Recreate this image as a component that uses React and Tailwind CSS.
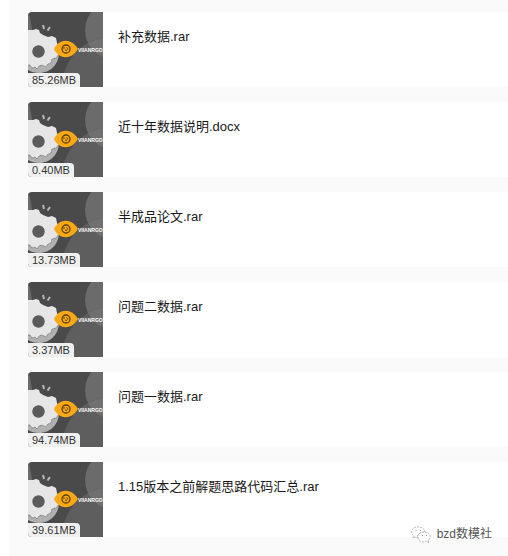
import React from "react";

const files = [
  { name: "补充数据.rar", size: "85.26MB" },
  { name: "近十年数据说明.docx", size: "0.40MB" },
  { name: "半成品论文.rar", size: "13.73MB" },
  { name: "问题二数据.rar", size: "3.37MB" },
  { name: "问题一数据.rar", size: "94.74MB" },
  { name: "1.15版本之前解题思路代码汇总.rar", size: "39.61MB" },
];

const Cover = () => {
  return (
    <svg viewBox="0 0 75 75" className="block size-full" aria-hidden="true">
      <rect width="75" height="75" fill="#4a4a4a" />
      <path d="M0 0C2 4 3 11 4 18L0 20Z" fill="#6b6b6b" />
      <circle cx="86" cy="18" r="29" fill="#6b6b6b" />
      <circle cx="84" cy="75" r="50" fill="#5e5e5e" />
      <path d="M60 31A50 50 0 0 1 75 26V45A29 29 0 0 1 60 31Z" fill="#707070" />
      <path d="M31 38C32 52 22 61 11 61C7 61 3 60 0 58V38Z" fill="#b0b0b0" />
      <path
        d="M0 18L5 18L8 17L11 18L12 21L15 23L20 25L24 24L28 26L29 31L31 35L30 39L31 42L28 46L24 47L23 51L20 52L18 55L14 53L11 54L9 57L7 55L4 56L2 53L0 53Z"
        fill="#e6e6e6"
      />
      <path
        d="M31 42L28 46L24 47L23 51L20 52L18 55L14 53L11 54L9 57L7 55L4 56L2 53L0 53"
        fill="none"
        stroke="#5b5b5b"
        strokeWidth="0.7"
        strokeDasharray="1 0.5"
      />
      <circle cx="10.5" cy="39.5" r="6.2" fill="#5b5b5b" />
      <path d="M15 13L16 17M22 15L19.5 18.5" stroke="#b8b8b8" strokeWidth="2" />
      <path d="M26 37C31 26 44 26 50 37C44 48 31 48 26 37Z" fill="#faa814" />
      <circle cx="38" cy="37" r="4" fill="none" stroke="#59420f" strokeWidth="1.3" />
      <path d="M35 36H37M38.5 35.5A1.5 1.5 0 1 1 37 38" fill="none" stroke="#59420f" />
      <text
        x="50"
        y="40"
        fill="#ffffff"
        className="font-['Liberation_Sans',sans-serif] text-[5px] font-bold"
      >
        VIIANRGO
      </text>
    </svg>
  );
};

const FileRow = ({ file }) => {
  return (
    <li className="flex bg-white rounded-l-sm">
      <div className="relative size-[75px] shrink-0 overflow-hidden rounded-l-sm">
        <Cover />
        <span className="absolute bottom-0 left-0 rounded-tr bg-[#f0f0f0] px-1 text-[11px] leading-[14px] text-[#333333]">
          {file.size}
        </span>
      </div>
      <p className="min-w-0 flex-1 px-[15px] pt-[15px] text-[13px] leading-5 text-[#191919]">
        {file.name}
      </p>
    </li>
  );
};

const Watermark = () => {
  return (
    <div className="absolute right-4 bottom-3 flex items-center gap-1.5">
      <svg
        viewBox="0 0 20 17"
        className="h-[17px] w-5"
        fill="#ffffff"
        stroke="#a5a5a5"
        strokeWidth="0.8"
        strokeDasharray="2 1"
        aria-hidden="true"
      >
        <path d="M2 12L3 10C-1 7 0 1 7 1C12 1 14 4 14 6C8 6 6 9 7 12C6 12 5 11 5 11Z" />
        <path d="M13 6C9 6 7 8 7 11C7 14 10 16 13 16L15 15L18 17L17 14C21 11 19 6 13 6Z" />
        <path d="M4.5 4.5h1M9 4.5h1M11 9.5h1M15 9.5h1" stroke="#777777" strokeDasharray="none" />
      </svg>
      <span className="text-[12px] leading-5 text-[#555555] [text-shadow:-1px_-1px_0_#ffffff]">
        bzd数模社
      </span>
    </div>
  );
};

const App = () => {
  return (
    <div className="relative bg-white pl-[10px] font-['Liberation_Sans','Noto_Sans_CJK_SC',sans-serif]">
      <ul className="flex flex-col gap-[15px] bg-[#fafafa] pt-3 pb-[19px] pl-[18px]">
        {files.map((file) => (
          <FileRow key={file.name} file={file} />
        ))}
      </ul>
      <Watermark />
    </div>
  );
};

export default App;
